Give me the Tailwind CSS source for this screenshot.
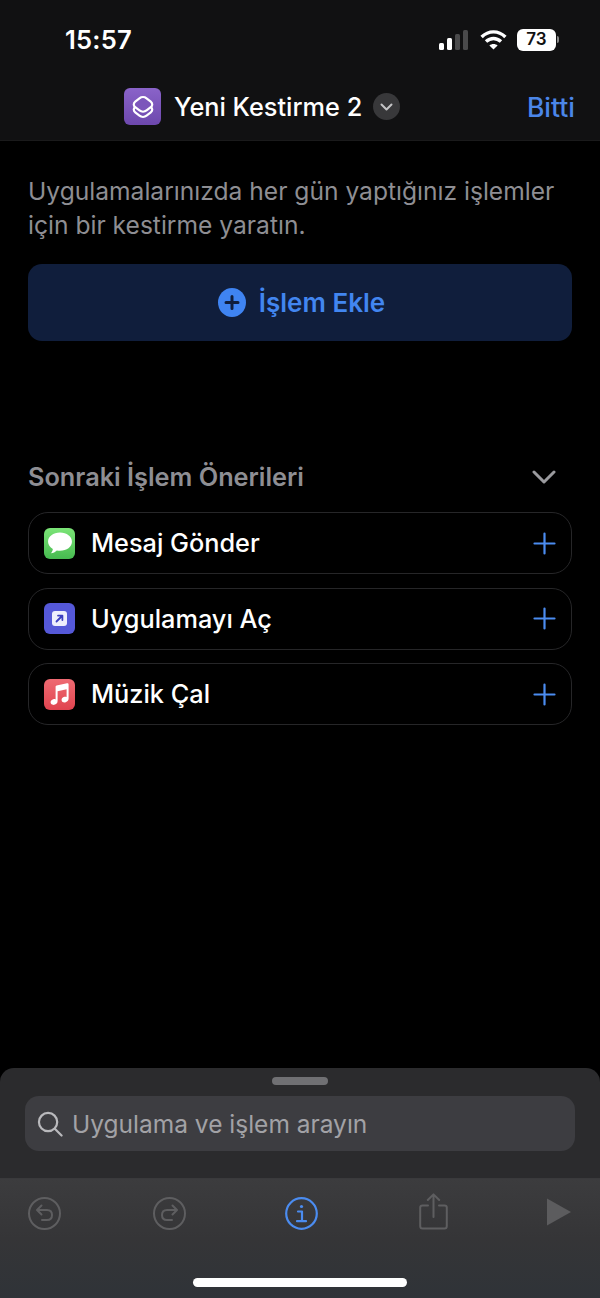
<!DOCTYPE html>
<html lang="tr">
<head>
    <meta charset="UTF-8">
    <meta name="viewport" content="width=device-width, initial-scale=1.0">
    <title>Yeni Kestirme 2</title>
    <script src="https://cdn.jsdelivr.net/npm/@tailwindcss/browser@4"></script>
</head>
<body class="bg-black font-['Inter',sans-serif] overflow-hidden">
<div class="w-[600px] h-[1298px] flex flex-col">

    <!-- status bar + nav -->
    <header class="h-[141px] shrink-0 bg-[#111112] border-b border-[#1a1a1b]">
        <div class="h-[80px] pl-[65px] pr-[41px] flex items-center justify-between">
            <span class="text-white text-[25.6px] font-semibold tracking-[0.2px]">15:57</span>
            <div class="flex items-center mt-[-1px]">
                <div class="flex items-end gap-[3px] h-[20px] mr-[12px]">
                    <div class="w-[5px] h-[7px] rounded-[1.5px] bg-white"></div>
                    <div class="w-[5px] h-[12px] rounded-[1.5px] bg-white"></div>
                    <div class="w-[5px] h-[16px] rounded-[1.5px] bg-[#4a4a4b]"></div>
                    <div class="w-[5px] h-[20px] rounded-[1.5px] bg-[#4a4a4b]"></div>
                </div>
                <svg class="mr-[10px]" width="27" height="20" viewBox="0 0 27 20" fill="none" stroke="white" stroke-width="3.4" stroke-linecap="butt">
                    <path d="M1.6 7 C8.5 0.2 18.5 0.2 25.4 7"/>
                    <path d="M6 11.6 C10.5 7.4 16.5 7.4 21 11.6"/>
                    <path d="M13.5 19.5 L9.4 15.4 C11.6 13.4 15.4 13.4 17.6 15.4 Z" fill="white" stroke="none"/>
                </svg>
                <div class="w-[39px] h-[22px] rounded-[6px] bg-white flex items-center justify-center text-[#111] text-[17px] font-semibold leading-none">73</div>
                <div class="w-[2px] h-[7px] rounded-r-full bg-[#8a8a8a] ml-[1px]"></div>
            </div>
        </div>
        <div class="relative h-[60px] flex items-start pl-[124px] pt-[8px]">
            <div class="w-[37px] h-[37px] rounded-[6px] bg-gradient-to-b from-[#8a63c9] to-[#6d48ad] flex items-center justify-center">
                <svg width="24" height="24" viewBox="0 0 24 24" fill="none" stroke="white" stroke-width="2.2">
                    <rect x="-8" y="-8" width="16" height="16" rx="5" transform="translate(12 14.6) scale(1 .78) rotate(45)" vector-effect="non-scaling-stroke"/>
                    <rect x="-8" y="-8" width="16" height="16" rx="5" fill="#7c56bb" transform="translate(12 9.4) scale(1 .78) rotate(45)" vector-effect="non-scaling-stroke"/>
                </svg>
            </div>
            <span class="ml-[13px] mt-[1px] text-white text-[25.3px] leading-[36px] font-medium">Yeni Kestirme 2</span>
            <div class="ml-[11px] mt-[5px] w-[27px] h-[27px] rounded-full bg-[#38383a] flex items-center justify-center">
                <svg width="13" height="8" viewBox="0 0 13 8" fill="none" stroke="#c4c4c6" stroke-width="2" stroke-linecap="round" stroke-linejoin="round"><path d="M1.5 1.5 L6.5 6.5 L11.5 1.5"/></svg>
            </div>
            <span class="ml-auto mr-[25px] mt-[1px] text-[#4b86e8] text-[26.5px] leading-[36px] font-medium">Bitti</span>
        </div>
    </header>

    <!-- content -->
    <main class="flex-1 px-[28px] pt-[33px]">
        <p class="text-[#8e8e93] text-[24.6px] leading-[34px]">Uygulamalarınızda her gün yaptığınız işlemler için bir kestirme yaratın.</p>

        <button class="mt-[22px] w-full h-[77px] rounded-[14px] bg-[#101e3c] flex items-center justify-center gap-[13px] pl-[3px]">
            <svg width="28" height="29" viewBox="0 0 28 29">
                <ellipse cx="14" cy="14.5" rx="14" ry="14.5" fill="#3f84f2"/>
                <path d="M14 8.5 V20.5 M8 14.5 H20" stroke="#101e3c" stroke-width="3" stroke-linecap="round"/>
            </svg>
            <span class="text-[#4286f0] text-[26px] font-semibold">İşlem Ekle</span>
        </button>

        <div class="mt-[118px] h-[36px] flex items-center justify-between">
            <span class="text-[#8e8e93] text-[25.3px] font-semibold">Sonraki İşlem Önerileri</span>
            <svg class="mr-[16px]" width="24" height="14" viewBox="0 0 24 14" fill="none" stroke="#9a9a9e" stroke-width="3" stroke-linecap="round" stroke-linejoin="round"><path d="M2 2 L12 12 L22 2"/></svg>
        </div>

        <ul class="mt-[17px] flex flex-col gap-[13.5px]">
            <li class="h-[62px] rounded-[20px] border border-[#262628] flex items-center pl-[15px] pr-[15px]">
                <div class="w-[31px] h-[31px] rounded-[6px] bg-gradient-to-b from-[#7be477] to-[#46bb50] flex items-center justify-center">
                    <svg width="26" height="24" viewBox="0 0 25 23"><path fill="white" d="M12.5 1.5 C19 1.5 24 5.4 24 10.3 C24 15.2 19 19 12.5 19 C11.4 19 10.4 18.9 9.4 18.7 C8 20.2 6 21.2 3.6 21.4 C4.8 20.2 5.5 18.7 5.6 17.2 C2.8 15.6 1 13.1 1 10.3 C1 5.4 6 1.5 12.5 1.5 Z"/></svg>
                </div>
                <span class="ml-[16px] text-white text-[25.3px] font-medium">Mesaj Gönder</span>
                <svg class="ml-auto" width="23" height="23" viewBox="0 0 23 23" stroke="#4b8cf0" stroke-width="2.2" stroke-linecap="round"><path d="M11.5 1.5 V21.5 M1.5 11.5 H21.5"/></svg>
            </li>
            <li class="h-[62px] rounded-[20px] border border-[#262628] flex items-center pl-[15px] pr-[15px]">
                <div class="w-[31px] h-[31px] rounded-[6px] bg-[#5558d8] flex items-center justify-center">
                    <div class="w-[15px] h-[15px] rounded-[3px] bg-[#eeeefc] flex items-center justify-center">
                        <svg width="9" height="9" viewBox="0 0 9 9" fill="none" stroke="#3c3fc0" stroke-width="1.8" stroke-linecap="round" stroke-linejoin="round"><path d="M1.5 7.5 L7 2 M3 1.6 H7.4 V6"/></svg>
                    </div>
                </div>
                <span class="ml-[16px] text-white text-[25.3px] font-medium">Uygulamayı Aç</span>
                <svg class="ml-auto" width="23" height="23" viewBox="0 0 23 23" stroke="#4b8cf0" stroke-width="2.2" stroke-linecap="round"><path d="M11.5 1.5 V21.5 M1.5 11.5 H21.5"/></svg>
            </li>
            <li class="h-[62px] rounded-[20px] border border-[#262628] flex items-center pl-[15px] pr-[15px]">
                <div class="w-[31px] h-[31px] rounded-[6px] bg-gradient-to-b from-[#ee6a72] to-[#e0434f] flex items-center justify-center">
                    <svg width="21" height="25" viewBox="0 0 21 25"><path fill="white" d="M18 1.2 L7.6 3.4 C7 3.5 6.6 4 6.6 4.6 V17.4 C6 17.1 5.2 17 4.4 17.2 C2.6 17.6 1.4 19 1.6 20.6 C1.8 22.2 3.4 23.2 5.2 22.8 C7.2 22.4 8.6 21 8.6 19 V9.2 L17.6 7.3 V15 C17 14.7 16.2 14.6 15.4 14.8 C13.6 15.2 12.4 16.6 12.6 18.2 C12.8 19.8 14.4 20.8 16.2 20.4 C18.2 20 19.6 18.6 19.6 16.6 V2.4 C19.6 1.6 18.9 1 18 1.2 Z"/></svg>
                </div>
                <span class="ml-[16px] text-white text-[25.3px] font-medium">Müzik Çal</span>
                <svg class="ml-auto" width="23" height="23" viewBox="0 0 23 23" stroke="#4b8cf0" stroke-width="2.2" stroke-linecap="round"><path d="M11.5 1.5 V21.5 M1.5 11.5 H21.5"/></svg>
            </li>
        </ul>
    </main>

    <!-- bottom sheet -->
    <section class="h-[230px] shrink-0 rounded-t-[14px] bg-[#2b2b2d] flex flex-col overflow-hidden">
        <div class="h-[110px] shrink-0 flex flex-col items-center pt-[9px] px-[25px]">
            <div class="w-[56px] h-[8px] rounded-full bg-[#707073]"></div>
            <div class="mt-[11px] w-full h-[55px] rounded-[14px] bg-[#3d3d41] flex items-center pl-[12px]">
                <svg width="26" height="26" viewBox="0 0 27 27" fill="none" stroke="#b9b9bc" stroke-width="2.3" stroke-linecap="round"><circle cx="11.5" cy="11.5" r="9.5"/><path d="M18.5 18.5 L25.5 25.5"/></svg>
                <span class="ml-[9px] mt-[2px] text-[#a2a2a6] text-[24.5px]">Uygulama ve işlem arayın</span>
            </div>
        </div>
        <div class="flex-1 flex flex-col border-t border-[#3a3a3c] bg-gradient-to-b from-[#3c3c3e] via-[#353537] to-[#2f3338]">
            <div class="h-[68px] flex items-center pl-[28px]">
                <svg width="33" height="33" viewBox="0 0 33 33" fill="none" stroke="#5e5e60" stroke-width="2" stroke-linecap="round" stroke-linejoin="round"><circle cx="16.5" cy="16.5" r="15.5"/><path d="M13.5 8.5 L9 13 L13.5 17.5 M9.5 13 H19 C22 13 24 15 24 18 C24 21 22 23 19 23 H14"/></svg>
                <svg class="ml-[92px]" width="33" height="33" viewBox="0 0 33 33" fill="none" stroke="#5e5e60" stroke-width="2" stroke-linecap="round" stroke-linejoin="round"><circle cx="16.5" cy="16.5" r="15.5"/><path d="M19.5 8.5 L24 13 L19.5 17.5 M23.5 13 H14 C11 13 9 15 9 18 C9 21 11 23 14 23 H19"/></svg>
                <svg class="ml-[99px]" width="33" height="33" viewBox="0 0 33 33" fill="none" stroke="#4b8cf0" stroke-width="2.2" stroke-linecap="round" stroke-linejoin="round"><circle cx="16.5" cy="16.5" r="15.3"/><circle cx="16.5" cy="9.5" r="1.6" fill="#4b8cf0" stroke="none"/><path d="M13 14.5 H17 V24 M12 24.2 H21"/></svg>
                <svg class="ml-[101px] mt-[-4px]" width="29" height="37" viewBox="0 0 29 37" fill="none" stroke="#5e5e60" stroke-width="2" stroke-linecap="round" stroke-linejoin="round"><path d="M9 12.5 H3.5 C2 12.5 1.2 13.3 1.2 14.8 V33 C1.2 34.8 2 35.6 3.5 35.6 H25.5 C27 35.6 27.8 34.8 27.8 33 V14.8 C27.8 13.3 27 12.5 25.5 12.5 H20 M14.5 24 V2 M8.8 7 L14.5 1.4 L20.2 7"/></svg>
                <svg class="ml-[98px] mt-[-2px]" width="26" height="28" viewBox="0 0 26 28"><path fill="#5c5c5e" d="M1 0.5 L25 14 L1 27.5 Z"/></svg>
            </div>
            <div class="mt-auto mb-[11px] mx-auto w-[214px] h-[9px] rounded-full bg-white"></div>
        </div>
    </section>
</div>
</body>
</html>
